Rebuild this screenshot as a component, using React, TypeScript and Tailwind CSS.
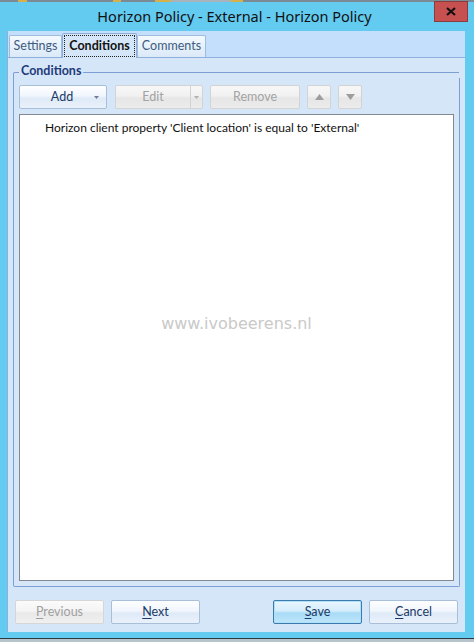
import React from 'react';

const ui = { fontFamily: 'Lato, "Noto Sans", sans-serif' };

const Tri: React.FC<{ up?: boolean; className?: string }> = ({ up, className }) => (
  <svg width="9" height="6" viewBox="0 0 9 6" className={className}>
    {up ? <path d="M0 6 L4.5 0 L9 6 Z" fill="currentColor" /> : <path d="M0 0 L9 0 L4.5 6 Z" fill="currentColor" />}
  </svg>
);

const Caret: React.FC<{ className?: string }> = ({ className }) => (
  <svg width="5" height="3" viewBox="0 0 5 3" className={className}>
    <path d="M0 0 L5 0 L2.5 3 Z" fill="currentColor" />
  </svg>
);

const btnOn =
  'border border-[#a9bfd8] rounded-[2px] bg-[linear-gradient(to_bottom,#fdfeff_0%,#f1f6fd_45%,#dfeaf7_55%,#e9f1fb_100%)] text-[#1b3a66]';
const btnOff =
  'border border-[#d3d3d3] rounded-[2px] bg-[linear-gradient(to_bottom,#f7f7f7_0%,#f1f1f1_45%,#e6e6e6_55%,#ececec_100%)] text-[#a3a3a3]';

const Footer: React.FC<{ label: string; mn: string; variant?: 'off' | 'def' }> = ({ label, mn, variant }) => {
  const rest = label.slice(1);
  const cls =
    variant === 'off'
      ? 'border border-[#d6d6d6] bg-[linear-gradient(to_bottom,#fbfbfb_0%,#f4f4f4_45%,#e9e9e9_55%,#f0f0f0_100%)] text-[#a0a0a0]'
      : variant === 'def'
      ? 'border border-[#3d7bad] bg-[linear-gradient(to_bottom,#e9f6fe_0%,#d4edfc_45%,#a9dbf6_55%,#bfe6fb_100%)] text-[#1b3a66] shadow-[inset_0_0_0_1px_#aee0fa]'
      : 'border border-[#a9bfd8] bg-[linear-gradient(to_bottom,#fdfeff_0%,#f1f6fd_45%,#dfeaf7_55%,#e9f1fb_100%)] text-[#1b3a66]';
  return (
    <div className={`w-[89px] h-[24px] rounded-[2px] flex items-center justify-center text-[12.5px] ${cls}`}>
      <span>
        <span className="underline underline-offset-2">{mn}</span>
        {rest}
      </span>
    </div>
  );
};

export default function App() {
  return (
    <div className="w-[474px] h-[642px] bg-[#63caf0] flex flex-col overflow-hidden" style={ui}>
      {/* desktop strip behind the window */}
      <div className="h-[2px] flex bg-[#7c8a95]">
        <div className="w-[18px]" />
        <div className="w-[9px] bg-[#d8b04a]" />
        <div className="w-[86px]" />
        <div className="w-[8px] bg-[#d8b04a]" />
        <div className="w-[34px]" />
        <div className="w-[16px] bg-[#d8b04a]" />
        <div className="w-[60px] bg-[#a9b3bb]" />
        <div className="w-[12px] bg-[#d8b04a]" />
      </div>

      {/* title bar */}
      <div className="h-[29px] grid grid-cols-[1fr_auto_1fr] items-start">
        <div />
        <div
          className="pt-[3px] pr-[5px] text-[14.5px] leading-[22px] text-[#111] whitespace-nowrap"
          style={{ fontFamily: '"Noto Sans", sans-serif' }}
        >
          Horizon Policy - External - Horizon Policy
        </div>
        <div className="flex justify-end pr-[6px] -mt-[1px]">
          <div className="w-[34px] h-[21px] bg-[#c75050] border border-[#8c3a3a] flex items-center justify-center">
            <svg width="10" height="9" viewBox="0 0 10 9">
              <path d="M1 1 L9 8 M9 1 L1 8" stroke="#111" strokeWidth="2.2" />
            </svg>
          </div>
        </div>
      </div>

      {/* client area */}
      <div className="ml-[7px] mr-[9px] h-[601px] flex flex-col bg-[#d5e6f8] border-l border-[#8eb0dc]">
        {/* tab strip */}
        <div className="h-[26px] bg-[#c4dffc] flex items-end pl-[1px] text-[12.5px]">
          <div className="h-[22px] w-[53px] border border-b-0 border-[#9fbbe0] bg-[linear-gradient(to_bottom,#f4f9fe,#dbe9f8)] flex items-center justify-center text-[#3e5b80] rounded-t-[2px]">
            Settings
          </div>
          <div className="h-[25px] w-[75px] -mb-[1px] border border-b-0 border-[#8eaed8] bg-[#d5e6f8] flex items-stretch p-[1px] relative z-10 rounded-t-[2px]">
            <div className="flex-1 border border-dotted border-[#222] flex items-center justify-center font-bold text-[#111]">
              Conditions
            </div>
          </div>
          <div className="h-[22px] w-[69px] border border-b-0 border-[#9fbbe0] bg-[linear-gradient(to_bottom,#f4f9fe,#dbe9f8)] flex items-center justify-center text-[#3e5b80] rounded-t-[2px]">
            Comments
          </div>
        </div>

        {/* content */}
        <div className="flex-1 border-t border-[#8eb0dc] flex flex-col px-[5px] pt-[6px]">
          {/* group box */}
          <div className="h-[523px] flex flex-col">
            <div className="flex items-center h-[14px]">
              <div className="w-[6px] h-[6px] border-l border-t border-[#7c9fd3] self-end rounded-tl-[2px]" />
              <span className="px-[2px] font-bold text-[12.5px] text-[#1e3a7a] leading-[14px]">Conditions</span>
              <div className="flex-1 border-t border-[#7c9fd3] self-end h-[6px]" />
              <div className="w-[1px]" />
            </div>
            <div className="flex-1 border border-t-0 border-[#7c9fd3] flex flex-col px-[5px] pt-[7px] pb-[5px] rounded-b-[2px]">
              {/* toolbar */}
              <div className="flex items-center h-[24px] text-[12.5px]">
                <div className={`w-[88px] h-[24px] flex items-center ${btnOn}`}>
                  <span className="flex-1 text-center pl-[10px]">Add</span>
                  <Caret className="text-[#6d7f96] mr-[7px]" />
                </div>
                <div className={`ml-[8px] w-[88px] h-[24px] flex items-stretch ${btnOff}`}>
                  <span className="flex-1 flex items-center justify-center">Edit</span>
                  <div className="w-[12px] border-l border-[#d3d3d3] flex items-center justify-center">
                    <Caret className="text-[#b0b0b0]" />
                  </div>
                </div>
                <div className={`ml-[7px] w-[90px] h-[24px] flex items-center justify-center ${btnOff}`}>Remove</div>
                <div className={`ml-[7px] w-[24px] h-[24px] flex items-center justify-center ${btnOff}`}>
                  <Tri up className="text-[#9d9d9d]" />
                </div>
                <div className={`ml-[7px] w-[24px] h-[24px] flex items-center justify-center ${btnOff}`}>
                  <Tri className="text-[#9d9d9d]" />
                </div>
              </div>

              {/* list */}
              <div className="mt-[5px] flex-1 bg-white border border-[#828790] flex flex-col">
                <div className="pl-[25px] pt-[5px] text-[12px] text-[#111] leading-[16px]">
                  Horizon client property 'Client location' is equal to 'External'
                </div>
                <div className="pt-[178px] flex justify-center">
                  <span
                    className="text-[16px] text-[#c9c9c9] leading-[20px]"
                    style={{ fontFamily: '"DejaVu Sans", Verdana, sans-serif' }}
                  >
                    www.ivobeerens.nl
                  </span>
                </div>
              </div>
            </div>
          </div>

          {/* footer buttons */}
          <div className="mt-[13px] flex items-center pl-[2px]">
            <Footer label="Previous" mn="P" variant="off" />
            <div className="ml-[7px]">
              <Footer label="Next" mn="N" />
            </div>
            <div className="ml-auto flex gap-[7px] mr-[2px]">
              <Footer label="Save" mn="S" variant="def" />
              <Footer label="Cancel" mn="C" />
            </div>
          </div>
        </div>
      </div>

      <div className="flex-1" />
      <div className="h-[1px] bg-[#2c3a44]" />
      <div className="h-[3px] bg-[#b8c4cc]" />
    </div>
  );
}
